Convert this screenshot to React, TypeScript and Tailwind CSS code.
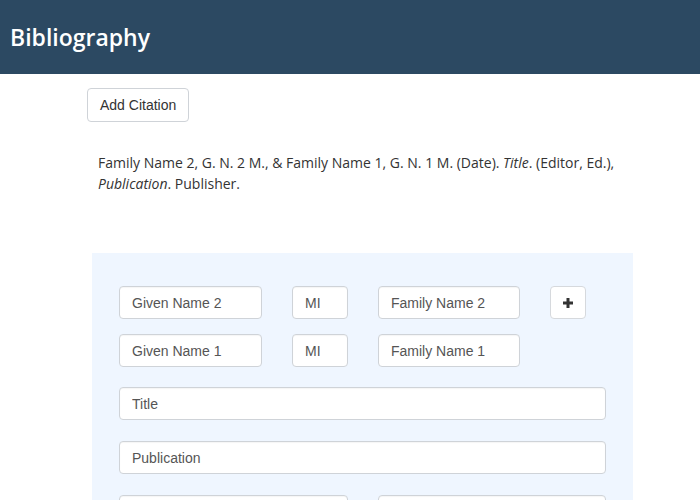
import { useState } from 'react';

const inputCls =
  'h-[33px] rounded-[4px] border border-[#cfd3d8] bg-white px-3 text-[14px] text-[#555] placeholder:text-[#555] outline-none shadow-[inset_0_1px_1px_rgba(0,0,0,0.04)]';

function PlusIcon() {
  return (
    <svg width="12" height="12" viewBox="0 0 12 12" fill="none">
      <path d="M6 1v10M1 6h10" stroke="#333" strokeWidth="3" />
    </svg>
  );
}

export default function App() {
  const [authors] = useState([
    { given: 'Given Name 2', family: 'Family Name 2' },
    { given: 'Given Name 1', family: 'Family Name 1' },
  ]);

  return (
    <div className="min-h-screen bg-white font-['Liberation_Sans',Arial,sans-serif]">
      <header className="h-[74px] bg-[#2c4962] flex items-center px-[10px]">
        <h1 className="text-white text-[23px] font-semibold font-['Open_Sans',sans-serif]">
          Bibliography
        </h1>
      </header>

      <main className="pl-[87px]">
        <button className="mt-[14px] h-[34px] px-3 rounded-[4px] border border-[#cfd3d8] bg-white text-[14px] text-[#333]">
          Add Citation
        </button>

        <p className="mt-[30px] pl-[11px] w-[540px] text-[14px] leading-[21px] text-[#333] font-['Open_Sans',sans-serif]">
          Family Name 2, G. N. 2 M., &amp; Family Name 1, G. N. 1 M. (Date). <i>Title</i>. (Editor, Ed.),{' '}
          <i>Publication</i>. Publisher.
        </p>

        <section className="mt-[59px] ml-[5px] w-[541px] bg-[#eff6ff] pt-[33px] px-[27px] pb-8">
          <div className="flex flex-col gap-[15px]">
            {authors.map((a, i) => (
              <div key={i} className="flex gap-[30px]">
                <input className={`${inputCls} w-[143px]`} placeholder={a.given} />
                <input className={`${inputCls} w-[56px]`} placeholder="MI" />
                <input className={`${inputCls} w-[142px]`} placeholder={a.family} />
                {i === 0 && (
                  <button className="h-[33px] w-[36px] rounded-[4px] border border-[#d6d9dd] bg-white flex items-center justify-center">
                    <PlusIcon />
                  </button>
                )}
              </div>
            ))}
          </div>

          <div className="mt-[20px] flex flex-col gap-[21px]">
            <input className={`${inputCls} w-full`} placeholder="Title" />
            <input className={`${inputCls} w-full`} placeholder="Publication" />
            <div className="flex gap-[30px]">
              <input className={`${inputCls} flex-1`} placeholder="Editor" />
              <input className={`${inputCls} flex-1`} placeholder="Publisher" />
            </div>
          </div>
        </section>
      </main>
    </div>
  );
}
